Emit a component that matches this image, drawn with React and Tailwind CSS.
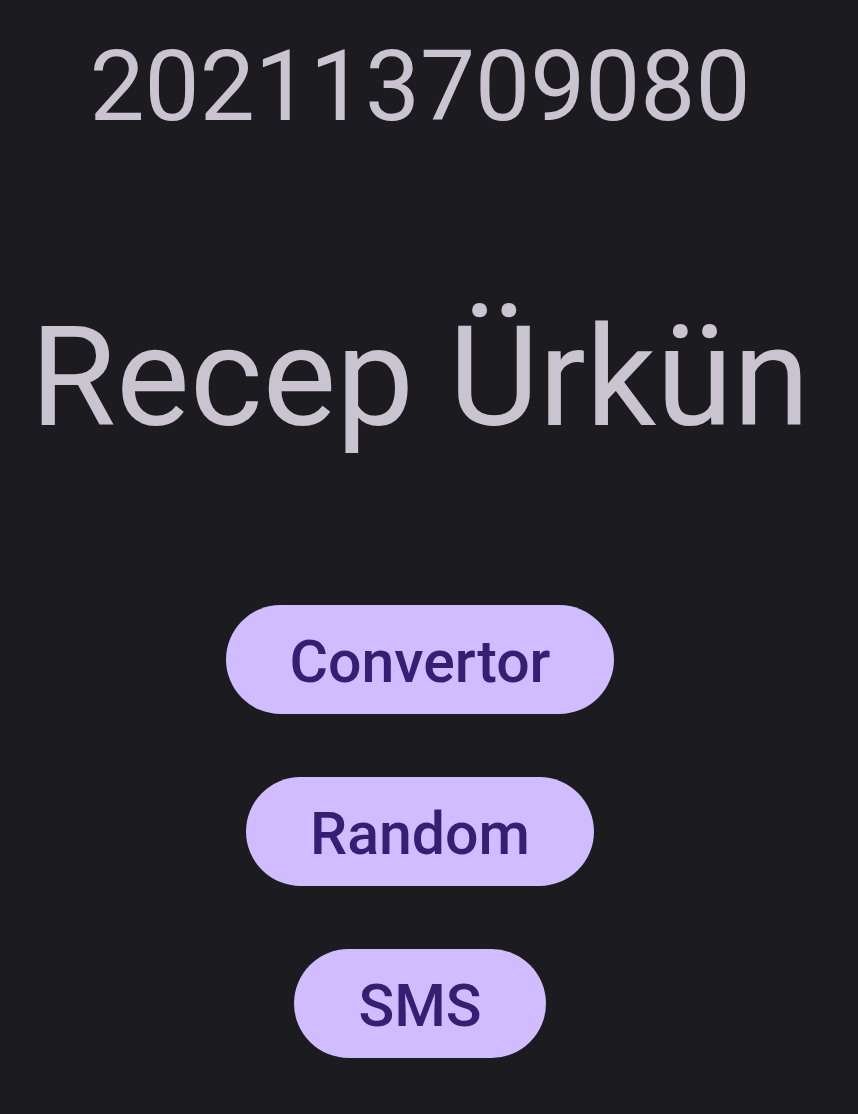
export default function App() {
    const buttons = ["Convertor", "Random", "SMS"];
    return (
        <main className="min-h-[1114px] w-full bg-[#1c1b1f] flex flex-col items-center pr-[18px] font-['Roboto',sans-serif]">
            <h2 className="mt-[38px] text-[98px] leading-none text-[#cac4d0]">202113709080</h2>
            <h1 className="mt-[172px] text-[139px] leading-none text-[#cac4d0]">Recep Ürkün</h1>
            <div className="mt-[158px] flex flex-col items-center gap-[63px]">
                {buttons.map((b) => (
                    <button key={b} className="h-[109px] px-[64px] pt-[5px] rounded-full bg-[#d0bcff] text-[#381e72] text-[59px] font-medium flex items-center">
                        {b}
                    </button>
                ))}
            </div>
        </main>
    );
}
